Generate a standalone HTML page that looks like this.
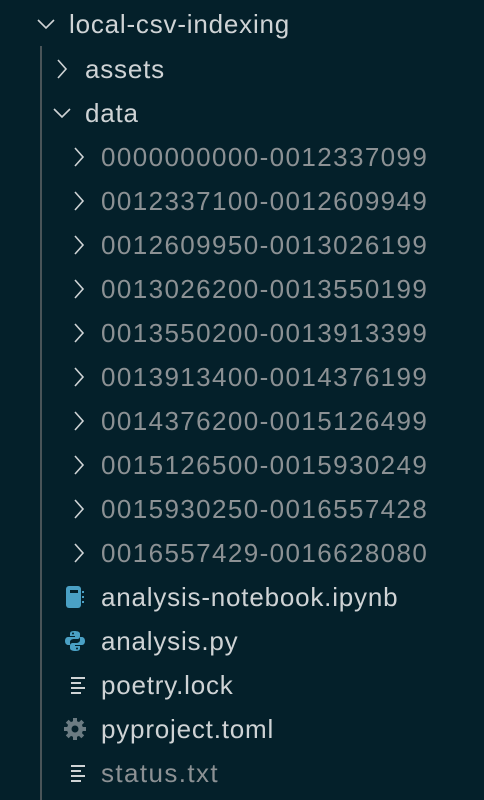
<!DOCTYPE html>
<html><head><style>
html,body{margin:0;padding:0;}
body{width:484px;height:800px;background:#04202a;overflow:hidden;position:relative;font-family:"Liberation Sans",sans-serif;font-size:26px;letter-spacing:0.8px;color:#cfd3d5;}
.r{position:absolute;height:44px;line-height:44px;white-space:nowrap;}
.g{color:#8c9194;letter-spacing:1.4px;}
.vl{position:absolute;left:40px;top:46px;width:2px;height:754px;background:#4a5458;}
svg{position:absolute;}
</style></head><body>
<div class="vl"></div>
<svg style="left:36px;top:16px" width="20" height="16" viewBox="0 0 20 16"><path d="M2 4 L10 12 L18 4" fill="none" stroke="#cfd3d5" stroke-width="1.6"/></svg>
<div class="r" style="left:69px;top:2px">local-csv-indexing</div>
<svg style="left:55px;top:58px" width="14" height="22" viewBox="0 0 14 22"><path d="M3 2 L11 11 L3 20" fill="none" stroke="#cfd3d5" stroke-width="1.6"/></svg>
<div class="r" style="left:85px;top:47px">assets</div>
<svg style="left:52px;top:105px" width="20" height="16" viewBox="0 0 20 16"><path d="M2 4 L10 12 L18 4" fill="none" stroke="#cfd3d5" stroke-width="1.6"/></svg>
<div class="r" style="left:85px;top:91px">data</div>
<div id="d"></div>
<script>
var n=["0000000000-0012337099","0012337100-0012609949","0012609950-0013026199","0013026200-0013550199","0013550200-0013913399","0013913400-0014376199","0014376200-0015126499","0015126500-0015930249","0015930250-0016557428","0016557429-0016628080"];
var h="";
for(var i=0;i<n.length;i++){var y=135+44*i;
h+='<svg style="left:72px;top:'+(y+11)+'px" width="14" height="22" viewBox="0 0 14 22"><path d="M3 2 L11 11 L3 20" fill="none" stroke="#cfd3d5" stroke-width="1.6"/></svg><div class="r g" style="left:101px;top:'+y+'px">'+n[i]+'</div>';}
document.getElementById("d").innerHTML=h;
</script>
<svg style="left:64px;top:585px" width="22" height="24" viewBox="0 0 22 24"><rect x="2" y="1" width="15" height="22" rx="3" fill="#4aa0c4"/><rect x="6" y="5" width="8" height="3" fill="#04202a"/><rect x="18" y="6" width="2" height="2" fill="#4aa0c4"/><rect x="18" y="11" width="2" height="2" fill="#4aa0c4"/><rect x="18" y="16" width="2" height="2" fill="#4aa0c4"/></svg>
<div class="r" style="left:101px;top:575px">analysis-notebook.ipynb</div>
<svg style="left:64px;top:630px" width="22" height="22" viewBox="0 0 22 22"><path d="M10 1 C6 1 6 3 6 4 V6 H11 V7 H4 C2 7 1 9 1 11 C1 14 3 15 4 15 H6 V12 C6 10 8 9 10 9 H13 C15 9 16 8 16 6 V4 C16 2 14 1 10 1Z" fill="#4aa0c4"/><path d="M12 21 C16 21 16 19 16 18 V16 H11 V15 H18 C20 15 21 13 21 11 C21 8 19 7 18 7 H16 V10 C16 12 14 13 12 13 H9 C7 13 6 14 6 16 V18 C6 20 8 21 12 21Z" fill="#4aa0c4"/><circle cx="9" cy="3.5" r="1" fill="#04202a"/><circle cx="13" cy="18.5" r="1" fill="#04202a"/></svg>
<div class="r" style="left:101px;top:619px">analysis.py</div>
<svg style="left:70px;top:676px" width="18" height="18" viewBox="0 0 18 18"><g stroke="#cfd3d5" stroke-width="2"><path d="M1 2H15M1 7H11M1 12H15M1 17H11"/></g></svg>
<div class="r" style="left:101px;top:663px">poetry.lock</div>
<svg style="left:63px;top:717px" width="24" height="24" viewBox="0 0 24 24"><g fill="#6b7b82"><circle cx="12" cy="12" r="8"/><rect x="10" y="1" width="4" height="22"/><rect x="1" y="10" width="22" height="4"/><rect x="10" y="1" width="4" height="22" transform="rotate(45 12 12)"/><rect x="10" y="1" width="4" height="22" transform="rotate(-45 12 12)"/></g><circle cx="12" cy="12" r="3.5" fill="#04202a"/></svg>
<div class="r" style="left:101px;top:707px">pyproject.toml</div>
<svg style="left:70px;top:764px" width="18" height="18" viewBox="0 0 18 18"><g stroke="#cfd3d5" stroke-width="2"><path d="M1 2H15M1 7H11M1 12H15M1 17H11"/></g></svg>
<div class="r g" style="left:101px;top:751px">status.txt</div>
</body></html>
